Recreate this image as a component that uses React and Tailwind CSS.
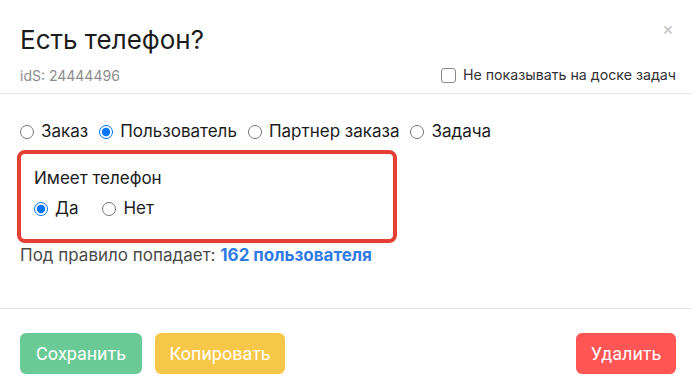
import { useState } from "react";

const targets = ["Заказ", "Пользователь", "Партнер заказа", "Задача"];

function Radio({ name, label, checked, onChange }) {
  return (
    <label className="flex items-center gap-[7px] cursor-pointer">
      <input
        type="radio"
        name={name}
        checked={checked}
        onChange={onChange}
        className="m-0 w-[14px] h-[14px] accent-[#0075ff]"
      />
      <span>{label}</span>
    </label>
  );
}

export default function App() {
  const [target, setTarget] = useState("Пользователь");
  const [hasPhone, setHasPhone] = useState(true);

  return (
    <div className="relative w-[692px] h-[392px] bg-white text-[#1c1c1c] font-['Inter',sans-serif] overflow-hidden">
      <button className="absolute top-[20px] right-[18px] text-[18px] leading-none text-[#c4c4c4]">×</button>

      <div className="px-5 pt-6 pb-2 border-b border-[#e6e6e6]">
        <h1 className="text-[26px] leading-8">Есть телефон?</h1>
        <div className="mt-[9px] flex items-center justify-between h-5">
          <span className="text-[14px] text-[#8c8c8c]">idS: 24444496</span>
          <label className="flex items-center gap-[7px] text-[14.2px] text-[#333] mr-[-4px]">
            <span className="w-[15px] h-[15px] border border-[#8a8a8a] rounded-[3px]" />
            Не показывать на доске задач
          </label>
        </div>
      </div>

      <div className="pt-[26px] h-[215px] border-b border-[#e6e6e6] text-[17px]">
        <div className="flex items-center gap-[11px] px-5 h-6">
          {targets.map((t) => (
            <Radio key={t} name="target" label={t} checked={target === t} onChange={() => setTarget(t)} />
          ))}
        </div>

        <div className="mt-[6px] ml-[17px] w-[380px] border-4 border-[#e53e33] rounded-[8px] pl-[13px] pt-3 pb-[18px]">
          <div className="h-6 leading-6">Имеет телефон</div>
          <div className="mt-[7px] flex items-center gap-[24px] h-6">
            <Radio name="phone" label="Да" checked={hasPhone} onChange={() => setHasPhone(true)} />
            <Radio name="phone" label="Нет" checked={!hasPhone} onChange={() => setHasPhone(false)} />
          </div>
        </div>

        <div className="px-5 leading-6 text-[#4a4a4a]">
          Под правило попадает: <span className="font-bold text-[#2f7be3]">162 пользователя</span>
        </div>
      </div>

      <div className="flex items-center px-5 pt-6 gap-[13px] font-['Roboto',sans-serif] text-[18px] text-white">
        <button className="w-[122px] h-[41px] rounded-[6px] bg-[#69ca95]">Сохранить</button>
        <button className="w-[130px] h-[41px] rounded-[6px] bg-[#f7c74a]">Копировать</button>
        <button className="ml-auto mr-[-4px] w-[100px] h-[41px] rounded-[6px] bg-[#ff5555]">Удалить</button>
      </div>
    </div>
  );
}
